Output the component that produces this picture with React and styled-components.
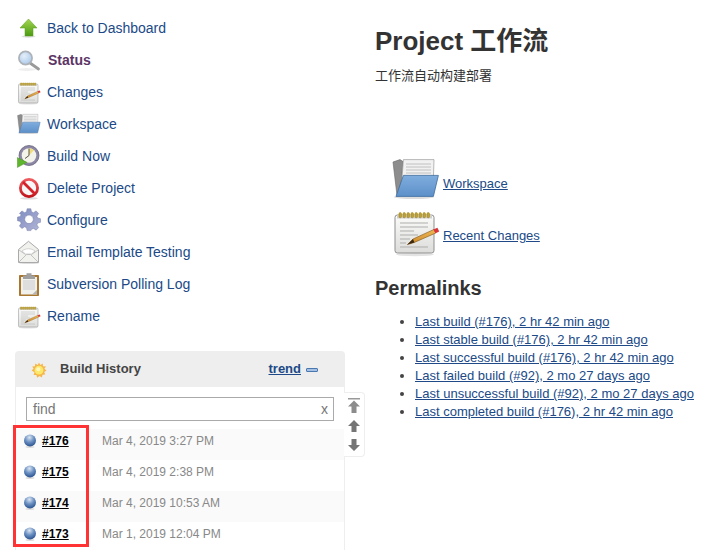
import React from "react";
import styled, { createGlobalStyle } from "styled-components";

const Global = createGlobalStyle`
  html, body { margin: 0; padding: 0; background: #fff; overflow: hidden; }
  body { font-family: "Liberation Sans", Arial, "Noto Sans CJK SC", sans-serif; color: #333; }
`;

const ArrowIcon = () => (
  <svg width="24" height="24" viewBox="0 0 24 24">
    <defs>
      <linearGradient id="ag" x1="0" y1="0" x2="0" y2="1">
        <stop offset="0" stopColor="#a4d651" />
        <stop offset="1" stopColor="#4c9a12" />
      </linearGradient>
    </defs>
    <ellipse cx="11.5" cy="20.500" rx="7" ry="1.200" fill="#ddd" />
    <path d="M11.500 3 20 12h-4v8H8v-8H3z" fill="url(#ag)" stroke="#5b9c1e" strokeWidth=".5" />
  </svg>
);

const SearchIcon = () => (
  <svg width="24" height="24" viewBox="0 0 24 24">
    <defs>
      <radialGradient id="lens" cx=".4" cy=".35" r=".7">
        <stop offset="0" stopColor="#e4effa" />
        <stop offset="1" stopColor="#a9c8ea" />
      </radialGradient>
    </defs>
    <ellipse cx="10" cy="21.500" rx="9" ry="1.500" fill="#efefef" />
    <path d="M13 15 21.500 21" stroke="#9a9a9a" strokeWidth="2.800" strokeLinecap="round" />
    <circle cx="8.500" cy="10" r="6.600" fill="url(#lens)" stroke="#adb2b6" strokeWidth="1.700" />
  </svg>
);

const NotepadIcon = ({ size = 24 }) => (
  <svg width={size} height={size} viewBox="0 0 24 24" style={{ overflow: "visible" }}>
    <defs>
      <linearGradient id="padg" x1="0" y1="0" x2="0" y2="1">
        <stop offset="0" stopColor="#fbfbfa" />
        <stop offset="1" stopColor="#dcdcda" />
      </linearGradient>
      <linearGradient id="pen" x1="0" y1="1" x2="1" y2="0">
        <stop offset="0" stopColor="#c9892c" />
        <stop offset="1" stopColor="#f0b653" />
      </linearGradient>
    </defs>
    <ellipse cx="11.500" cy="23.800" rx="9.500" ry=".8" fill="#e3e3e3" />
    <rect x="1.500" y="4" width="19.500" height="19" rx="1.200" fill="url(#padg)" stroke="#8f8f8f" strokeWidth=".5" />
    <path d="M2.500 4h17.500v1.800H2.500z" fill="#cfcfcf" />
    {[3.5, 5.5, 7.500, 9.500, 11.500, 13.500, 15.500, 17.500].map((x) => (
      <rect key={x} x={x} y="2.800" width="1.200" height="2.600" rx=".5" fill="#c9a520" stroke="#7a6510" strokeWidth=".2" />
    ))}
    <path d="M4 8h14M4 10h14M4 12h7M4 14h9M4 16h5M4 18h3M4 20h14" stroke="#adadad" strokeWidth=".5" />
    <path d="M7.700 18.800 10.500 16 21 11.200l.9 1.800-10.700 4.700z" fill="url(#pen)" stroke="#7d5318" strokeWidth=".3" />
    <path d="M7.700 18.800 10.500 16l.7 1.700z" fill="#3b2a10" />
    <path d="m20.700 11.300 2-.9.900 1.800-1.800.9z" fill="#d8343a" />
  </svg>
);

const FolderIcon = ({ size = 24 }) => (
  <svg width={size} height={size} viewBox="0 0 24 24" style={{ overflow: "visible" }}>
    <defs>
      <linearGradient id="blue" x1="0" y1="0" x2="0" y2="1">
        <stop offset="0" stopColor="#7fadde" />
        <stop offset="1" stopColor="#5d90c9" />
      </linearGradient>
    </defs>
    <ellipse cx="11" cy="21" rx="10" ry="1" fill="#ddd" />
    <path d="M.5 3.500 4 2.300l1.500 1-1.500 17H2.500z" fill="#8d8d8d" stroke="#666" strokeWidth=".3" />
    <path d="M5.700 2.300H21l-.3 9.500H5z" fill="#f1f1f1" stroke="#8b8b8b" strokeWidth=".3" />
    <path d="M7 4.500h12.500M7 6h12.500M7 7.500h12.500M7 9h12.500" stroke="#b5b5b5" strokeWidth=".4" />
    <path d="M5.700 10.200h17.500l-2.500 10.500H2z" fill="url(#blue)" stroke="#3f6c9e" strokeWidth=".4" />
  </svg>
);

const ClockIcon = () => (
  <svg width="24" height="24" viewBox="0 0 24 24">
    <circle cx="12" cy="11.500" r="10" fill="#8d87a6" stroke="#5c5870" strokeWidth=".7" />
    <circle cx="12" cy="11.500" r="7.300" fill="#f4f3ea" />
    <path d="M12 4.200a7.300 7.300 0 0 1 5 2L12 11.500z" fill="#f1dc7c" />
    <path d="M12 4.500v7l-4 3" stroke="#555" strokeWidth="1" fill="none" />
    <path d="M.3 13.500 10 18.300.3 23.500z" fill="#5fb52d" stroke="#3f8a1a" strokeWidth=".4" />
  </svg>
);

const NoIcon = () => (
  <svg width="24" height="24" viewBox="0 0 24 24">
    <defs>
      <linearGradient id="nog" x1="0" y1="0" x2="0" y2="1">
        <stop offset="0" stopColor="#ee5a5e" />
        <stop offset="1" stopColor="#c1161d" />
      </linearGradient>
    </defs>
    <ellipse cx="12" cy="22.300" rx="9" ry="1.200" fill="#ddd" />
    <circle cx="12" cy="12" r="8.600" fill="#f7f7f7" stroke="url(#nog)" strokeWidth="2.800" />
    <path d="M6 6 18 18" stroke="#d3222a" strokeWidth="2.800" />
  </svg>
);

const GearIcon = () => (
  <svg width="24" height="24" viewBox="0 0 24 24">
    <defs>
      <linearGradient id="gearg" x1="0" y1="0" x2="1" y2="1">
        <stop offset="0" stopColor="#7e8cc2" />
        <stop offset="1" stopColor="#b1b5d6" />
      </linearGradient>
    </defs>
    <path
      d="M10 1h4l.6 3.200 2.100.9 2.800-1.800 2.600 2.700-1.800 2.800.8 2 3 .7v3.800l-3 .7-.8 2 1.800 2.800-2.600 2.700-2.800-1.800-2.100.9L14 24h-4l-.6-3.100-2.100-.9-2.800 1.800-2.600-2.700 1.800-2.800-.8-2-3-.7v-3.800l3-.7.8-2L1.900 6 4.500 3.300l2.800 1.800 2.100-.9z"
      fill="url(#gearg)"
      stroke="#717aa3"
      strokeWidth=".5"
      transform="translate(.600 -.200) scale(.95)"
    />
    <circle cx="12" cy="11.300" r="4.300" fill="#fff" stroke="#6d769c" strokeWidth=".5" />
  </svg>
);

const MailIcon = () => (
  <svg width="24" height="24" viewBox="0 0 24 24">
    <ellipse cx="12" cy="23.300" rx="10" ry=".8" fill="#ddd" />
    <path d="M1.500 9.500 11.500 1.300l10 8.200V22.500h-20z" fill="#f1f1ee" stroke="#aaa" strokeWidth="1" />
    <path d="M5 11c4-3 9-3 13 0l-3.500 3h-6z" fill="#fff" stroke="#bbb" strokeWidth=".6" />
    <path d="M2 22l7.500-7.500h4L21 22M2 10l6.500 4.500M21 10l-6.500 4.500" stroke="#bbb" strokeWidth=".9" fill="none" />
  </svg>
);

const ClipboardIcon = () => (
  <svg width="24" height="24" viewBox="0 0 24 24">
    <rect x="2" y="3" width="20" height="21" rx=".8" fill="#a9772e" />
    <rect x="4" y="5" width="16" height="17.500" fill="#f0f0ec" />
    <path d="M6 8h12v10H6z" fill="#dedede" />
    <path d="M20 18v4.500h-5z" fill="#b5b5b5" />
    <path d="M6 5.500V3.500h3.500V1.200h5v2.300H18v3.500H6z" fill="#a0a0a0" />
  </svg>
);

const SunIcon = () => (
  <svg width="16" height="16" viewBox="0 0 16 16">
    <path
      d="M8 .5 9.300 3 11.800 1.600 12 4.200 15 4.500 13.400 6.800 15.500 8.500 13.200 10l1 2.600-2.700.1-.6 2.700L8.500 14l-2.300 1.700-.8-2.800-2.800.1.900-2.700L.5 8.500 2.600 6.800 1.200 4.500 4 4.200 4.200 1.500 6.700 3z"
      fill="#f7b64b"
    />
    <circle cx="8" cy="8.200" r="4.400" fill="#fbe96b" />
    <circle cx="7.300" cy="7.300" r="2" fill="#fff7c0" />
  </svg>
);

const Ball = () => (
  <svg width="14" height="14" viewBox="0 0 14 14">
    <defs>
      <radialGradient id="bb" cx=".45" cy=".25" r=".75">
        <stop offset="0" stopColor="#dde6f2" />
        <stop offset=".5" stopColor="#6d92c4" />
        <stop offset="1" stopColor="#29528f" />
      </radialGradient>
    </defs>
    <ellipse cx="7" cy="13" rx="4.500" ry="1" fill="#ddd" />
    <circle cx="7" cy="6.500" r="6" fill="url(#bb)" />
  </svg>
);

const ScrollArrow = ({ kind }) => {
  if (kind === "top")
    return (
      <svg width="12" height="15" viewBox="0 0 12 15">
        <rect x="0" y="0" width="12" height="1.500" fill="#999" />
        <path d="M6 2.500 12 8.500H8.500V15h-5V8.500H0z" fill="#8c8c8c" />
      </svg>
    );
  return (
    <svg width="12" height="12" viewBox="0 0 12 12">
      <path d={kind === "down" ? "M6 12 12 6H8.500V0h-5v6H0z" : "M6 0 12 6H8.500v6h-5V6H0z"} fill="#757575" />
    </svg>
  );
};

const Page = styled.div`
  display: flex;
  width: 701px;
  height: 550px;
  overflow: hidden;
`;

const Side = styled.aside`
  width: 345px;
  padding: 12px 0 0 15px;
  box-sizing: border-box;
  flex: none;
`;

const Task = styled.div`
  display: flex;
  align-items: center;
  height: 32px;
  padding-left: 2px;
  font-size: 14px;
  color: ${(p) => (p.$active ? "#5c3566" : "#204a87")};
  font-weight: ${(p) => (p.$active ? "bold" : "normal")};
`;

const TaskIcon = styled.span`
  width: 24px;
  height: 24px;
  margin-right: ${(p) => (p.$active ? 7 : 6)}px;
  flex: none;
  display: block;
  svg { display: block; }
`;

const Panel = styled.section`
  position: relative;
  margin-top: 19px;
  width: 330px;
  border: 1px solid #eee;
  border-bottom: 0;
  border-radius: 4px 4px 0 0;
  box-sizing: border-box;
  height: 200px;
`;

const PanelHead = styled.div`
  display: flex;
  align-items: center;
  height: 35px;
  background: #eee;
  padding-left: 15px;
  font-size: 13px;
  font-weight: bold;
  color: #444;
`;

const HeadTitle = styled.span`
  margin-left: 13px;
  padding-bottom: 2px;
  flex: 1;
`;

const Trend = styled.a`
  color: #204a87;
  text-decoration: underline;
  padding-bottom: 2px;
`;

const Minus = styled.span`
  display: block;
  width: 10px;
  height: 2px;
  margin: 0 26px 0 5px;
  background: #a5c0e2;
  border: 1px solid #4a78b0;
  border-radius: 1px;
`;

const SearchWrap = styled.div`
  padding: 10px 10px 8px;
`;

const SearchBox = styled.div`
  display: flex;
  justify-content: space-between;
  align-items: center;
  height: 24px;
  box-sizing: border-box;
  border: 1px solid #aaa;
  padding: 0 5px 0 6px;
  font-size: 14px;
  color: #777;
`;

const BuildRow = styled.div`
  display: flex;
  align-items: flex-start;
  height: 31px;
  box-sizing: border-box;
  padding: 5px 0 0 7px;
  background: ${(p) => (p.$odd ? "#fafafa" : "#fff")};
  font-size: 12px;
  line-height: 14px;
  color: #888;
  svg { display: block; flex: none; }
`;

const BuildLink = styled.a`
  width: 60px;
  margin-left: 5px;
  font-weight: bold;
  color: #000;
  text-decoration: underline;
`;

const Scroller = styled.div`
  position: absolute;
  left: 328px;
  top: 40px;
  width: 21px;
  height: 65px;
  box-sizing: border-box;
  background: #fff;
  border: 1px solid #eee;
  border-left: 0;
  border-radius: 0 4px 4px 0;
  display: flex;
  flex-direction: column;
  align-items: center;
  padding-top: 5px;
  gap: 7px;
  svg { display: block; }
`;

const Highlight = styled.div`
  position: absolute;
  left: -3px;
  top: 73px;
  width: 76px;
  height: 122px;
  box-sizing: border-box;
  border: 3px solid #f33;
  pointer-events: none;
`;

const Main = styled.main`
  flex: 1;
  padding: 24px 0 0 30px;
`;

const Title = styled.h1`
  margin: 0;
  font-size: 26px;
  line-height: 34px;
  font-weight: bold;
  color: #333;
`;

const Desc = styled.div`
  margin-top: 9px;
  font-size: 13px;
  line-height: 17px;
  color: #333;
`;

const Links = styled.div`
  margin: 71px 0 0 17px;
  display: flex;
  flex-direction: column;
  gap: 4px;
`;

const BigLink = styled.div`
  display: flex;
  align-items: center;
  height: 48px;
  font-size: 13px;
  svg { display: block; margin-right: 3px; }
  a { color: #204a87; text-decoration: underline; margin-top: 8px; }
`;

const Sub = styled.h2`
  margin: 20px 0 0;
  font-size: 20px;
  line-height: 26px;
  font-weight: bold;
  color: #333;
`;

const PermaList = styled.ul`
  margin: 12px 0 0;
  padding-left: 40px;
  font-size: 13px;
  line-height: 18px;
  li::marker { color: #444; }
  a { color: #204a87; text-decoration: underline; }
`;

const tasks = [
  { label: "Back to Dashboard", icon: <ArrowIcon /> },
  { label: "Status", icon: <SearchIcon />, active: true },
  { label: "Changes", icon: <NotepadIcon /> },
  { label: "Workspace", icon: <FolderIcon /> },
  { label: "Build Now", icon: <ClockIcon /> },
  { label: "Delete Project", icon: <NoIcon /> },
  { label: "Configure", icon: <GearIcon /> },
  { label: "Email Template Testing", icon: <MailIcon /> },
  { label: "Subversion Polling Log", icon: <ClipboardIcon /> },
  { label: "Rename", icon: <NotepadIcon /> },
];

const builds = [
  ["#176", "Mar 4, 2019 3:27 PM"],
  ["#175", "Mar 4, 2019 2:38 PM"],
  ["#174", "Mar 4, 2019 10:53 AM"],
  ["#173", "Mar 1, 2019 12:04 PM"],
];

const permalinks = [
  "Last build (#176), 2 hr 42 min ago",
  "Last stable build (#176), 2 hr 42 min ago",
  "Last successful build (#176), 2 hr 42 min ago",
  "Last failed build (#92), 2 mo 27 days ago",
  "Last unsuccessful build (#92), 2 mo 27 days ago",
  "Last completed build (#176), 2 hr 42 min ago",
];

export default function App() {
  return (
    <Page>
      <Global />
      <Side>
        {tasks.map((t) => (
          <Task key={t.label} $active={t.active}>
            <TaskIcon $active={t.active}>{t.icon}</TaskIcon>
            {t.label}
          </Task>
        ))}
        <Panel>
          <PanelHead>
            <SunIcon />
            <HeadTitle>Build History</HeadTitle>
            <Trend>trend</Trend>
            <Minus />
          </PanelHead>
          <SearchWrap>
            <SearchBox>
              <span>find</span>
              <span>x</span>
            </SearchBox>
          </SearchWrap>
          {builds.map(([id, date], i) => (
            <BuildRow key={id} $odd={i % 2 === 0}>
              <Ball />
              <BuildLink>{id}</BuildLink>
              {date}
            </BuildRow>
          ))}
          <Scroller>
            <ScrollArrow kind="top" />
            <ScrollArrow kind="up" />
            <ScrollArrow kind="down" />
          </Scroller>
          <Highlight />
        </Panel>
      </Side>
      <Main>
        <Title>Project 工作流</Title>
        <Desc>工作流自动构建部署</Desc>
        <Links>
          <BigLink>
            <FolderIcon size={48} />
            <a>Workspace</a>
          </BigLink>
          <BigLink>
            <NotepadIcon size={48} />
            <a>Recent Changes</a>
          </BigLink>
        </Links>
        <Sub>Permalinks</Sub>
        <PermaList>
          {permalinks.map((p) => (
            <li key={p}>
              <a>{p}</a>
            </li>
          ))}
        </PermaList>
      </Main>
    </Page>
  );
}
